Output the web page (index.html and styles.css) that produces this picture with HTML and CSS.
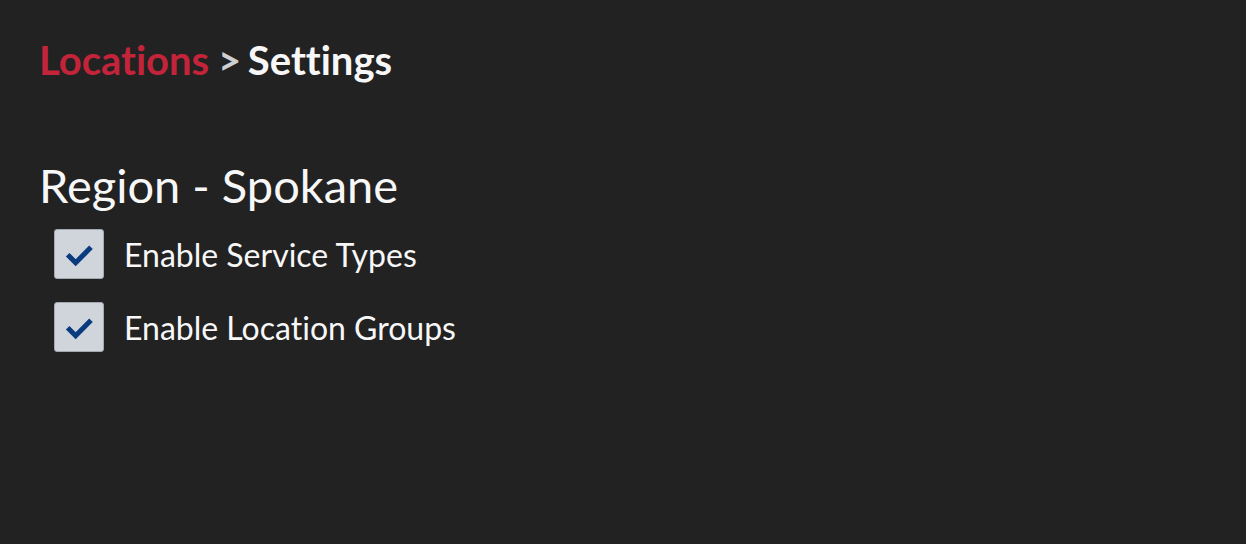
FILE: index.html
```html
<!DOCTYPE html>
<html lang="en">
<head>
  <meta charset="UTF-8">
  <meta name="viewport" content="width=device-width, initial-scale=1.0">
  <title>Location Settings</title>
  <link rel="stylesheet" href="styles.css">
</head>
<body>
  <div class="page">
    <h1 class="breadcrumb">
      <a href="#" class="crumb-link">Locations</a>
      <span class="crumb-sep">&gt;</span>
      <span class="crumb-current">Settings</span>
    </h1>

    <h2 class="region-title">Region - Spokane</h2>

    <div class="option">
      <span class="check">
        <svg viewBox="0 0 24 24" width="32" height="32"><path d="M3.5 12.5l6 6L21 7" fill="none" stroke="#0b3b7f" stroke-width="3.8"/></svg>
      </span>
      <span class="option-label">Enable Service Types</span>
    </div>

    <div class="option">
      <span class="check">
        <svg viewBox="0 0 24 24" width="32" height="32"><path d="M3.5 12.5l6 6L21 7" fill="none" stroke="#0b3b7f" stroke-width="3.8"/></svg>
      </span>
      <span class="option-label">Enable Location Groups</span>
    </div>
  </div>
</body>
</html>
```

FILE: styles.css
```css
body {
  margin: 0;
  background-color: #222222;
  color: #f7f7f8;
  font-family: Lato, "Open Sans", sans-serif;
  font-variant-ligatures: none;
}
.page {
  padding: 36px 39px;
}
.breadcrumb {
  margin: 0;
  font-size: 40px;
  font-weight: bold;
  line-height: 48px;
}
.crumb-link {
  color: #c3243a;
  text-decoration: none;
}
.crumb-sep {
  color: #cfcfd2;
  margin: 0 -3px 0 -1px;
}
.region-title {
  margin: 73px 0 16px;
  font-size: 47px;
  font-weight: normal;
  line-height: 56px;
}
.option {
  display: flex;
  align-items: center;
  gap: 20px;
  margin: 0 0 23px 15px;
}
.check {
  width: 48px;
  height: 48px;
  background: #d0d5dc;
  border: 1px solid #a3a9b1;
  border-radius: 3px;
  display: flex;
  align-items: center;
  justify-content: center;
}
.option-label {
  font-size: 32px;
}
```
